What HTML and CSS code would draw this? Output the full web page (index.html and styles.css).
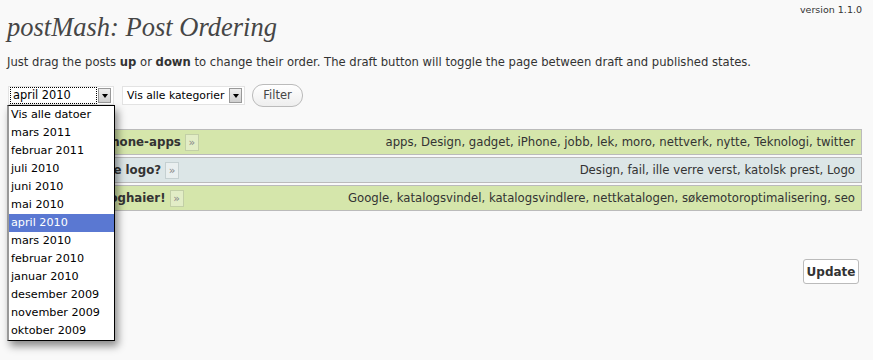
FILE: index.html
```html
<!DOCTYPE html>
<html>
<head>
<meta charset="utf-8">
<link rel="stylesheet" href="styles.css">
</head>
<body>
<div class="wrap">
  <div class="version">version 1.1.0</div>
  <h2 class="title">postMash: Post Ordering</h2>
  <p class="intro">Just drag the posts <b>up</b> or <b>down</b> to change their order. The draft button will toggle the page between draft and published states.</p>
  <div class="filters">
    <div class="select-wrap">
      <div class="select sel-date"><span class="sel-text focus">april 2010</span><span class="arrow"></span></div>
      <ul class="dropdown">
        <li>Vis alle datoer</li>
        <li>mars 2011</li>
        <li>februar 2011</li>
        <li>juli 2010</li>
        <li>juni 2010</li>
        <li>mai 2010</li>
        <li class="active">april 2010</li>
        <li>mars 2010</li>
        <li>februar 2010</li>
        <li>januar 2010</li>
        <li>desember 2009</li>
        <li>november 2009</li>
        <li>oktober 2009</li>
      </ul>
    </div>
    <div class="select sel-cat"><span class="sel-text">Vis alle kategorier</span><span class="arrow"></span></div>
    <button class="btn filter-btn">Filter</button>
  </div>
  <ul class="posts">
    <li class="post green"><span class="ptitle">Mine beste iPhone-apps</span><span class="go">&raquo;</span><span class="tags">apps, Design, gadget, iPhone, jobb, lek, moro, nettverk, nytte, Teknologi, twitter</span></li>
    <li class="post blue"><span class="ptitle">Verdens verste logo?</span><span class="go">&raquo;</span><span class="tags">Design, fail, ille verre verst, katolsk prest, Logo</span></li>
    <li class="post green"><span class="ptitle">Pass på kataloghaier!</span><span class="go">&raquo;</span><span class="tags">Google, katalogsvindel, katalogsvindlere, nettkatalogen, søkemotoroptimalisering, seo</span></li>
  </ul>
  <div class="actions"><button class="btn update-btn">Update</button></div>
</div>
</body>
</html>
```
FILE: styles.css
```css
* { box-sizing: border-box; }
html, body { margin: 0; padding: 0; background: #f9f9f9; min-height: 360px; }
body { font-family: "DejaVu Sans", "Liberation Sans", sans-serif; color: #333; font-size: 12px; }
.wrap { position: relative; padding: 0 11px 0 7px; min-height: 360px; }
.version { position: absolute; right: 11px; top: 4px; font-size: 9.5px; color: #333; }
.title { margin: 0; padding: 10px 0 0; font-family: "Liberation Serif", "Times New Roman", serif; font-style: italic; font-weight: normal; font-size: 26.5px; line-height: 34px; color: #464646; }
.intro { margin: 9px 0 0; font-size: 11.6px; line-height: 18px; color: #333; }
.intro b { font-weight: bold; }
.filters { display: flex; align-items: center; margin-top: 12px; height: 24px; }
.select-wrap { position: relative; }
.select { display: flex; align-items: center; height: 19px; background: #fff; border: 1px solid #e3e3e3; padding: 1px 2px 1px 2px; font-size: 11.4px; color: #000; }
.sel-date { width: 106px; margin-left: 1px; }
.sel-cat { width: 123px; margin-left: 8px; font-size: 10.8px; padding-left: 4px; }
.sel-text { flex: 1; white-space: nowrap; line-height: 15px; padding-left: 2px; }
.sel-cat .sel-text { padding-left: 0; }
.sel-text.focus { outline: 1px dotted #000; }
.arrow { flex: none; width: 13px; height: 15px; background: linear-gradient(#eee, #cfcfcf); border: 1px solid #999; position: relative; margin-left: 2px; }
.arrow::after { content: ""; position: absolute; left: 3px; top: 5px; border-left: 3px solid transparent; border-right: 3px solid transparent; border-top: 4px solid #000; }
.btn { font-family: "DejaVu Sans", sans-serif; font-size: 12px; color: #464646; background: #f2f2f2; border: 1px solid #bbb; cursor: pointer; }
.filter-btn { margin-left: 7px; height: 23px; width: 51px; border-radius: 11px; background: linear-gradient(#fff, #eee); padding: 0; font-size: 11.5px; }
.dropdown { position: absolute; top: 19px; left: 0; width: 108px; margin: 0; padding: 0; list-style: none; background: #fff; border: 1px solid #000; border-left: 2px solid #999; box-shadow: 3px 5px 8px rgba(0,0,0,0.45); z-index: 5; }
.dropdown li { height: 18px; line-height: 18px; padding-left: 2px; font-size: 11.2px; color: #000; white-space: nowrap; }
.dropdown li.active { background: #5a78d2; color: #fff; }
.posts { list-style: none; margin: 22px 0 0; padding: 0 0 0 1px; }
.post { display: flex; align-items: center; height: 26px; margin-bottom: 2px; border: 1px solid #bbb; padding: 0 6px 0 12px; }
.post.green { background: #d5e6ab; }
.post.blue { background: #dce6e7; }
.ptitle { font-weight: bold; font-size: 11.8px; color: #333; white-space: nowrap; }
.go { display: inline-block; margin-left: 4px; width: 14px; height: 17px; line-height: 15px; text-align: center; border: 1px solid #c2cfa6; background: #e2edc6; color: #888; font-size: 11px; }
.blue .go { border-color: #c5d0d1; background: #e9efef; }
.tags { margin-left: auto; font-size: 11.7px; color: #333; white-space: nowrap; }
.actions { display: flex; justify-content: flex-end; margin-top: 48px; padding-right: 3px; }
.update-btn { height: 25px; width: 56px; border-radius: 3px; background: #fff; font-weight: bold; color: #333; padding: 0; border-color: #bbb; }
```
